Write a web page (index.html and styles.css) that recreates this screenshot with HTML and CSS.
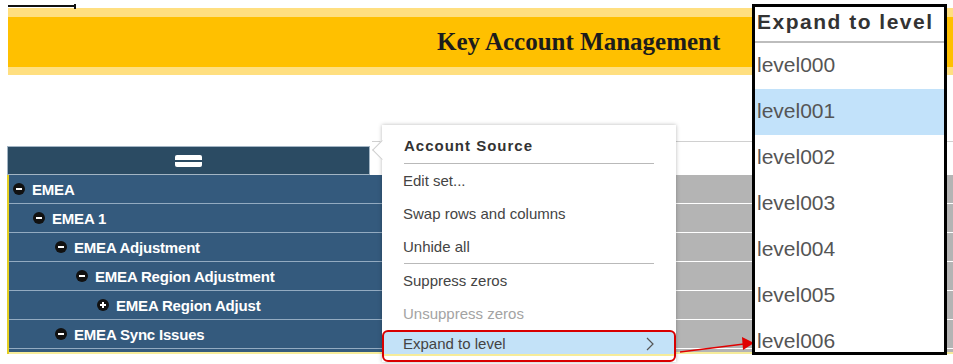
FILE: index.html
```html
<!doctype html>
<html lang="en">
<head>
    <meta charset="UTF-8">
    <title>Key Account Management</title>
    <link rel="stylesheet" href="styles.css">
</head>
<body>

<div class="ruler">
    <span class="ruler-line"></span>
    <span class="ruler-tick"></span>
</div>

<div class="banner">
    <h1 class="banner-title">Key Account Management</h1>
</div>

<div class="grid">
    <div class="grid-head">
        <div class="head-cell">
            <span class="burger"></span>
        </div>
        <div class="head-rest"></div>
    </div>

    <div class="rows">
        <div class="row">
            <div class="row-name lvl-0">
                <svg class="tog" viewBox="0 0 12 12"><circle cx="6" cy="6" r="6"/><rect x="3" y="5" width="6" height="2" fill="#fff"/></svg>
                EMEA
            </div>
            <div class="row-rest"></div>
        </div>
        <div class="row">
            <div class="row-name lvl-1">
                <svg class="tog" viewBox="0 0 12 12"><circle cx="6" cy="6" r="6"/><rect x="3" y="5" width="6" height="2" fill="#fff"/></svg>
                EMEA 1
            </div>
            <div class="row-rest"></div>
        </div>
        <div class="row">
            <div class="row-name lvl-2">
                <svg class="tog" viewBox="0 0 12 12"><circle cx="6" cy="6" r="6"/><rect x="3" y="5" width="6" height="2" fill="#fff"/></svg>
                EMEA Adjustment
            </div>
            <div class="row-rest"></div>
        </div>
        <div class="row">
            <div class="row-name lvl-3">
                <svg class="tog" viewBox="0 0 12 12"><circle cx="6" cy="6" r="6"/><rect x="3" y="5" width="6" height="2" fill="#fff"/></svg>
                EMEA Region Adjustment
            </div>
            <div class="row-rest"></div>
        </div>
        <div class="row">
            <div class="row-name lvl-4">
                <svg class="tog" viewBox="0 0 12 12"><circle cx="6" cy="6" r="6"/><rect x="3" y="5" width="6" height="2" fill="#fff"/><rect x="5" y="3" width="2" height="6" fill="#fff"/></svg>
                EMEA Region Adjust
            </div>
            <div class="row-rest"></div>
        </div>
        <div class="row">
            <div class="row-name lvl-2">
                <svg class="tog" viewBox="0 0 12 12"><circle cx="6" cy="6" r="6"/><rect x="3" y="5" width="6" height="2" fill="#fff"/></svg>
                EMEA Sync Issues
            </div>
            <div class="row-rest"></div>
        </div>
        <div class="row-end"></div>
    </div>
</div>

<div class="menu">
    <div class="menu-title">Account Source</div>
    <div class="menu-item">Edit set...</div>
    <div class="menu-item">Swap rows and columns</div>
    <div class="menu-item">Unhide all</div>
    <div class="menu-sep"></div>
    <div class="menu-item">Suppress zeros</div>
    <div class="menu-item is-disabled">Unsuppress zeros</div>
    <div class="menu-item is-active">
        Expand to level
        <svg class="chevron" viewBox="0 0 8 14"><path d="M1 1 L7 7 L1 13" fill="none" stroke="#555" stroke-width="1.2"/></svg>
    </div>
</div>

<svg class="pointer" viewBox="0 0 78 22">
    <line x1="2" y1="18" x2="66" y2="10" stroke="#e00000" stroke-width="1.3"/>
    <polygon points="64,3 76,9 65,16" fill="#e00000"/>
</svg>

<div class="levels">
    <div class="levels-title">Expand to level</div>
    <div class="level">level000</div>
    <div class="level is-active">level001</div>
    <div class="level">level002</div>
    <div class="level">level003</div>
    <div class="level">level004</div>
    <div class="level">level005</div>
    <div class="level">level006</div>
</div>

</body>
</html>
```

FILE: styles.css
```css
body {
    margin: 0;
    background: #fff;
    font-family: "Liberation Sans", Arial, sans-serif;
    overflow: hidden;
}

/* top ruler */
.ruler {
    display: flex;
    align-items: center;
    height: 4px;
    margin: 4px 0 0 8px;
}

.ruler-line {
    width: 66px;
    height: 2px;
    background: #111;
}

.ruler-tick {
    width: 2px;
    height: 5px;
    background: #111;
}

/* banner */
.banner {
    margin-left: 8px;
    height: 50px;
    background: #ffc000;
    border-top: 9px solid #ffdf80;
    border-bottom: 8px solid #ffdf80;
}

.banner-title {
    margin: 0;
    padding-left: 429px;
    font-family: "Liberation Serif", "Times New Roman", serif;
    font-size: 25px;
    font-weight: bold;
    line-height: 50px;
    color: #1c1c1c;
}

/* grid */
.grid {
    margin: 66px 0 0 7px;
}

.grid-head {
    display: flex;
    height: 34px;
}

.head-cell {
    display: flex;
    align-items: center;
    justify-content: center;
    box-sizing: border-box;
    width: 363px;
    height: 29px;
    margin-top: 5px;
    background: #2b4b63;
    border: 1px solid #a3b5c4;
}

.burger {
    width: 27px;
    height: 12px;
    background:
        linear-gradient(#fff, #fff) top / 100% 5px no-repeat,
        linear-gradient(#fff, #fff) bottom / 100% 5px no-repeat;
    border-radius: 2px;
}

.head-rest {
    flex: 1;
    margin-left: 2px;
    border-top: 1px solid #d0d0d0;
}

.rows {
    border-left: 2px solid #e4cf22;
}

.row {
    display: flex;
    height: 29px;
}

.row-name {
    display: flex;
    align-items: center;
    gap: 7px;
    box-sizing: border-box;
    width: 374px;
    padding-left: 4px;
    background: #345a7d;
    border-bottom: 1px solid #93abc1;
    color: #fff;
    font-size: 15px;
    font-weight: bold;
    letter-spacing: -0.2px;
}

.lvl-1 { padding-left: 24px; }
.lvl-2 { padding-left: 46px; }
.lvl-3 { padding-left: 67px; }
.lvl-4 { padding-left: 88px; }

.tog {
    width: 12px;
    height: 12px;
    fill: #111;
    flex-shrink: 0;
}

.row-rest {
    flex: 1;
    background: #b4b4b4;
    border-bottom: 1px solid #fff;
}

.row-end {
    height: 3px;
    background: linear-gradient(to right, #345a7d 374px, #b4b4b4 374px);
    border-bottom: 2px solid #f6ec9a;
}

/* context menu */
.menu {
    position: absolute;
    left: 382px;
    top: 125px;
    width: 294px;
    background: #fff;
    box-shadow: 0 0 4px rgba(0, 0, 0, 0.28);
    color: #444;
    font-size: 15px;
}

.menu::before {
    content: "";
    position: absolute;
    left: -7px;
    top: 18px;
    width: 13px;
    height: 13px;
    background: #fff;
    border-left: 1px solid #cfcfcf;
    border-bottom: 1px solid #cfcfcf;
    transform: rotate(45deg);
}

.menu-title {
    position: relative;
    margin: 0 22px;
    padding: 8px 0 4px;
    line-height: 26px;
    border-bottom: 1px solid #b9b9b9;
    font-weight: bold;
    letter-spacing: 1px;
    color: #333;
}

.menu-item {
    padding-left: 21px;
    line-height: 33px;
}

.menu-sep {
    height: 1px;
    margin: 0 22px;
    background: #b9b9b9;
}

.menu-item.is-disabled {
    color: #a3a3a3;
}

.menu-item.is-active {
    display: flex;
    align-items: center;
    justify-content: space-between;
    box-sizing: border-box;
    height: 32px;
    padding: 0 20px 4px 19px;
    line-height: 22px;
    border: 2px solid #d80000;
    border-radius: 6px;
    background: linear-gradient(#c3e2f8 0, #c3e2f8 22px, #f6ec9a 22px, #f6ec9a 24px, #fff 24px);
}

.chevron {
    width: 8px;
    height: 14px;
}

.pointer {
    position: absolute;
    left: 678px;
    top: 334px;
    width: 78px;
    height: 22px;
}

/* level panel */
.levels {
    position: absolute;
    left: 752px;
    top: 4px;
    box-sizing: border-box;
    width: 195px;
    height: 351px;
    overflow: hidden;
    background: #fff;
    border: 3px solid #000;
    color: #555;
}

.levels-title {
    height: 34px;
    padding-left: 2px;
    line-height: 30px;
    border-bottom: 2px solid #bdbdbd;
    font-size: 21px;
    font-weight: bold;
    letter-spacing: 1.5px;
    color: #333;
}

.level {
    height: 46px;
    padding-left: 2px;
    line-height: 44px;
    font-size: 21px;
}

.level.is-active {
    background: #c2e2fa;
}
```
